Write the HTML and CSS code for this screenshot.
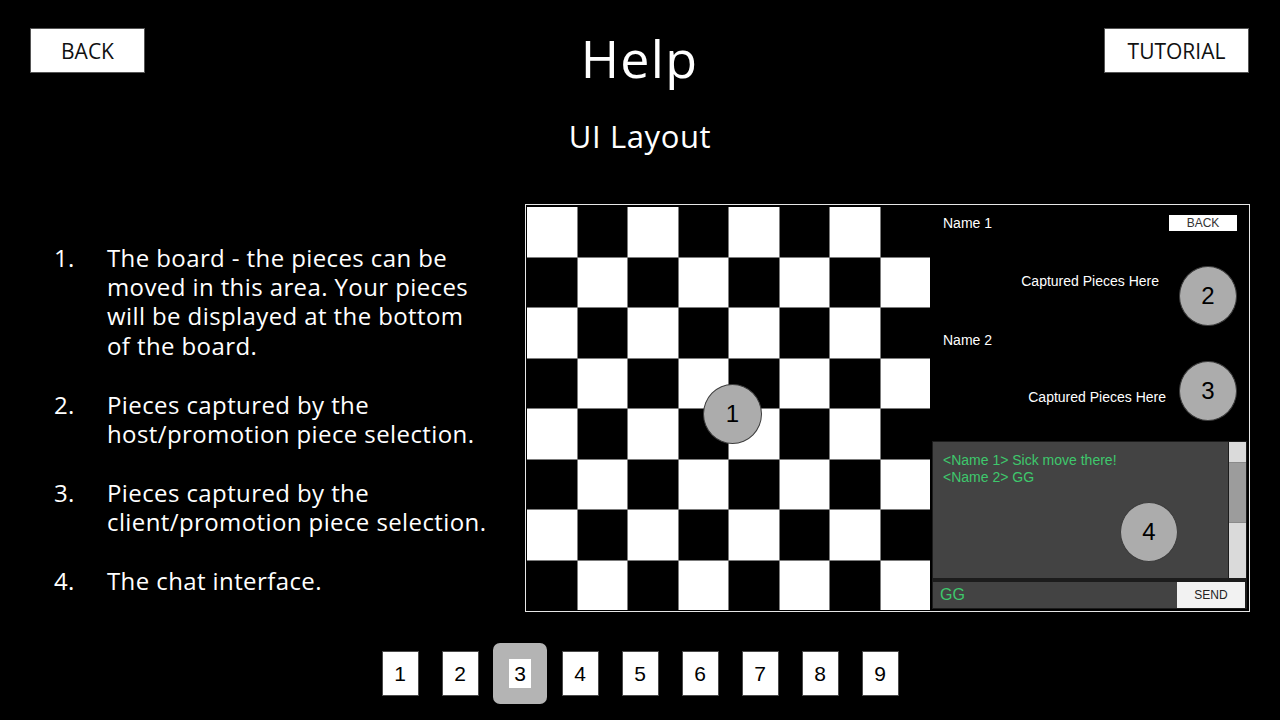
FILE: index.html
```html
<!DOCTYPE html>
<html>
<head>
<meta charset="utf-8">
<title>Help</title>
<link rel="stylesheet" href="styles.css">
</head>
<body>
<div class="page">
  <header class="header">
    <div class="btn btn-back">BACK</div>
    <h1 class="title">Help</h1>
    <div class="btn btn-tutorial">TUTORIAL</div>
  </header>
  <h2 class="subtitle">UI Layout</h2>
  <main class="main">
    <ol class="list">
      <li class="item"><span class="num">1.</span><span class="txt">The board - the pieces can be<br>moved in this area. Your pieces<br>will be displayed at the bottom<br>of the board.</span></li>
      <li class="item"><span class="num">2.</span><span class="txt">Pieces captured by the<br>host/promotion piece selection.</span></li>
      <li class="item"><span class="num">3.</span><span class="txt">Pieces captured by the<br>client/promotion piece selection.</span></li>
      <li class="item"><span class="num">4.</span><span class="txt">The chat interface.</span></li>
    </ol>
    <div class="frame">
      <div class="board" id="board">
        <div class="badge badge-1">1</div>
      </div>
      <div class="panel">
        <div class="p-head">
          <span class="p-name">Name 1</span>
          <span class="mini-back">BACK</span>
        </div>
        <div class="cap cap-1">
          <span class="cap-text">Captured Pieces Here</span>
          <div class="circle">2</div>
        </div>
        <div class="p-name p-name2">Name 2</div>
        <div class="cap cap-2">
          <span class="cap-text">Captured Pieces Here</span>
          <div class="circle">3</div>
        </div>
        <div class="chat">
          <div class="chat-top">
            <div class="msgs">
              <div class="msg">&lt;Name 1&gt; Sick move there!</div>
              <div class="msg">&lt;Name 2&gt; GG</div>
              <div class="badge badge-4">4</div>
            </div>
            <div class="scroll">
              <div class="sc-btn"></div>
              <div class="sc-thumb"></div>
              <div class="sc-track"></div>
            </div>
          </div>
          <div class="chat-input">
            <div class="input">GG</div>
            <div class="send">SEND</div>
          </div>
        </div>
      </div>
    </div>
  </main>
  <nav class="pager">
    <div class="slot"><div class="pg">1</div></div>
    <div class="slot"><div class="pg">2</div></div>
    <div class="slot"><div class="pg-active"><div class="pg-inner">3</div></div></div>
    <div class="slot"><div class="pg">4</div></div>
    <div class="slot"><div class="pg">5</div></div>
    <div class="slot"><div class="pg">6</div></div>
    <div class="slot"><div class="pg">7</div></div>
    <div class="slot"><div class="pg">8</div></div>
    <div class="slot"><div class="pg">9</div></div>
  </nav>
</div>
<script>
  (function () {
    var b = document.getElementById('board');
    for (var r = 0; r < 8; r++) {
      for (var c = 0; c < 8; c++) {
        var d = document.createElement('div');
        d.className = 'cell ' + (((r + c) % 2 === 0) ? 'w' : 'k');
        b.appendChild(d);
      }
    }
  })();
</script>
</body>
</html>
```

FILE: styles.css
```css
* { box-sizing: border-box; }
html, body { margin: 0; padding: 0; }
body {
  background: #000;
  color: #fff;
  width: 1280px;
  height: 720px;
  overflow: hidden;
  font-family: "Open Sans", "DejaVu Sans", sans-serif;
}
.page { width: 1280px; height: 720px; }

.header {
  display: grid;
  grid-template-columns: 1fr auto 1fr;
  align-items: start;
  padding: 22px 31px 0 30px;
}
.btn {
  margin-top: 6px;
  height: 45px;
  background: #fff;
  border: 1.5px solid #555;
  color: #111;
  font-size: 21px;
  display: flex;
  align-items: center;
  justify-content: center;
}
.btn-back { width: 115px; justify-self: start; }
.btn-tutorial { width: 145px; justify-self: end; }
.title {
  margin: 0;
  font-weight: 400;
  font-size: 52px;
  letter-spacing: 1.3px;
  line-height: 71px;
  text-align: center;
}
.subtitle {
  margin: 23px 0 0;
  font-weight: 400;
  font-size: 31px;
  letter-spacing: 0.6px;
  line-height: 40px;
  text-align: center;
}

.main {
  display: flex;
  align-items: flex-start;
  margin-top: 48px;
}
.list {
  list-style: none;
  margin: 38.5px 0 0;
  padding: 0 0 0 54px;
  width: 525px;
  display: flex;
  flex-direction: column;
  gap: 29.4px;
  font-size: 24px;
  letter-spacing: 0.4px;
  line-height: 29.4px;
}
.item { display: flex; white-space: nowrap; }
.num { width: 53px; flex: none; }

.frame {
  display: flex;
  width: 725px;
  height: 408px;
  border: 1px solid #e6e6e6;
  padding: 2px 0 1px 1px;
}
.board {
  position: relative;
  width: 403px;
  height: 403px;
  flex: none;
  display: grid;
  grid-template-columns: repeat(8, 1fr);
  grid-template-rows: repeat(8, 1fr);
  gap: 1px;
  background: #7c7c7c;
}
.cell.w { background: #fff; }
.cell.k { background: #000; }

.badge, .circle {
  width: 59px;
  height: 60px;
  border-radius: 50%;
  background: #acacac;
  border: 1px solid #3c3c3c;
  color: #000;
  font-family: "Liberation Sans", Arial, sans-serif;
  font-size: 24px;
  display: flex;
  align-items: center;
  justify-content: center;
}
.badge { position: absolute; }
.badge-1 { left: 176px; top: 177px; }
.badge-4 { left: 187px; top: 60px; width: 58px; }

.panel {
  width: 319px;
  flex: none;
  display: flex;
  flex-direction: column;
  font-family: "Liberation Sans", Arial, sans-serif;
  font-size: 14px;
  line-height: 16px;
  color: #fff;
}
.p-head {
  margin-top: 8px;
  display: flex;
  justify-content: space-between;
  align-items: center;
  padding: 0 12px 0 13px;
}
.p-name { height: 16px; }
.p-name2 { margin-top: 6px; padding-left: 13px; }
.mini-back {
  width: 68px;
  height: 16px;
  background: #fff;
  color: #333;
  font-size: 12px;
  line-height: 16px;
  text-align: center;
}
.cap {
  display: flex;
  justify-content: flex-end;
  align-items: flex-start;
  padding-right: 12px;
}
.circle { width: 58px; }
.cap-1 { margin-top: 35px; }
.cap-1 .cap-text { margin-top: 7px; margin-right: 20px; }
.cap-2 { margin-top: 13px; }
.cap-2 .cap-text { margin-top: 28px; margin-right: 13px; }

.chat {
  margin: 20px 0 0 2px;
  width: 315px;
  background: #1c1c1c;
  padding: 1px;
}
.chat-top { display: flex; height: 136px; }
.msgs {
  position: relative;
  width: 295px;
  background: #434343;
  padding: 10px 10px 0;
  color: #3ec86c;
  font-size: 14px;
  line-height: 16.5px;
}
.scroll {
  width: 18px;
  border-left: 1px solid #1c1c1c;
  display: flex;
  flex-direction: column;
}
.sc-btn { height: 21px; background: #dadada; border-bottom: 1px solid #8a8a8a; }
.sc-thumb { height: 60px; background: #9c9c9c; border-bottom: 1px solid #8a8a8a; }
.sc-track { flex: 1; background: #dadada; }

.chat-input { display: flex; margin-top: 4px; height: 26px; }
.input {
  width: 244px;
  background: #434343;
  color: #3ec86c;
  font-size: 16px;
  line-height: 26px;
  padding-left: 7px;
}
.send {
  width: 68px;
  background: #f2f2f2;
  color: #222;
  font-size: 12px;
  line-height: 26px;
  text-align: center;
}

.pager {
  display: flex;
  justify-content: center;
  align-items: center;
  margin-top: 31px;
  height: 61px;
}
.slot {
  width: 60px;
  display: flex;
  justify-content: center;
  align-items: center;
}
.pg {
  width: 37px;
  height: 45px;
  background: #fff;
  border: 1px solid #4a4a4a;
  color: #000;
  font-family: "Liberation Sans", Arial, sans-serif;
  font-size: 21px;
  display: flex;
  align-items: center;
  justify-content: center;
}
.pg-active {
  width: 54px;
  height: 61px;
  background: #b4b4b4;
  border-radius: 7px;
  display: flex;
  align-items: center;
  justify-content: center;
}
.pg-inner {
  width: 22px;
  height: 29px;
  background: #fff;
  color: #000;
  font-family: "Liberation Sans", Arial, sans-serif;
  font-size: 21px;
  display: flex;
  align-items: center;
  justify-content: center;
}
```
